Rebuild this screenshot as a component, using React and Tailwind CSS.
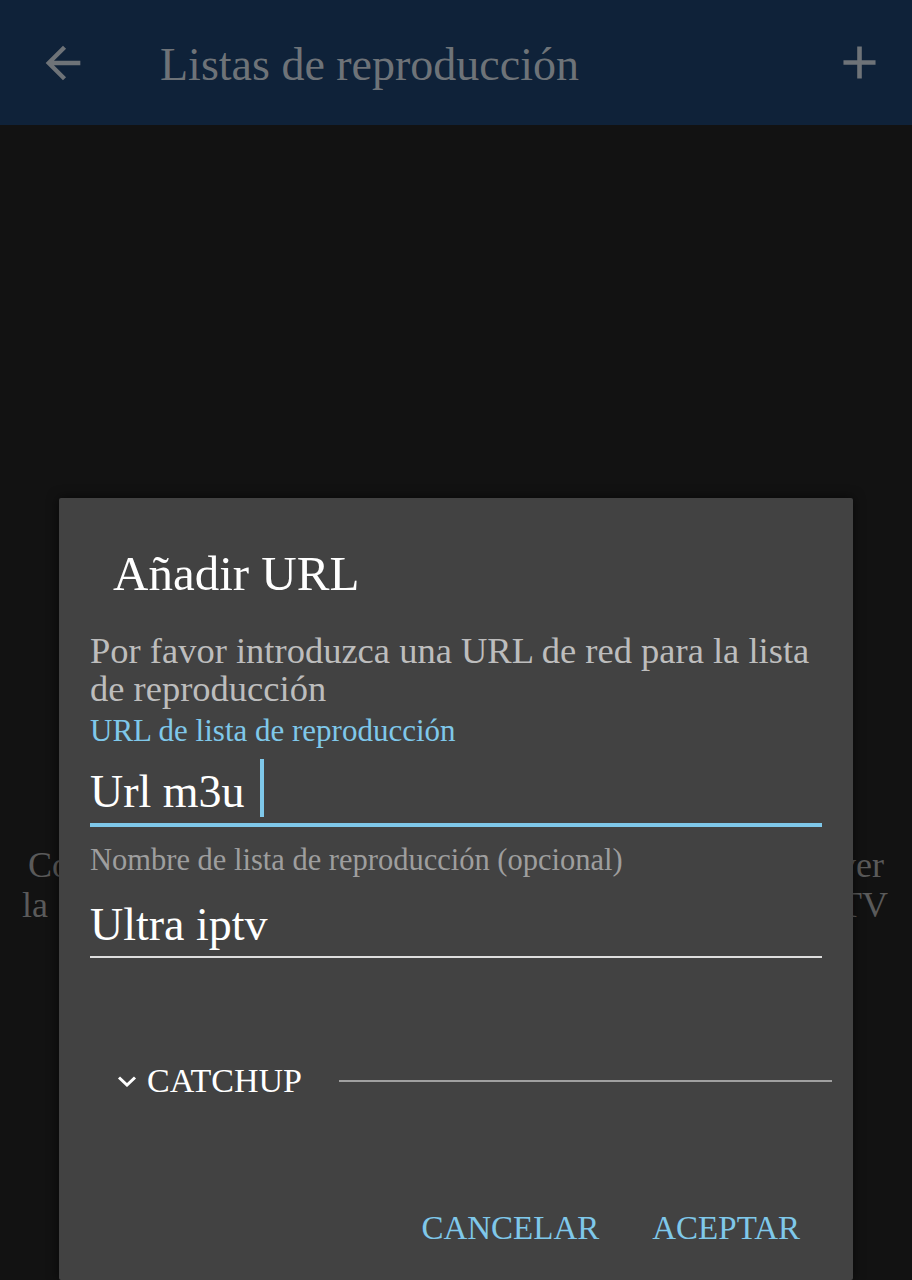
export default function App() {
  return (
    <div className="relative h-[1280px] w-full overflow-hidden bg-[#121212] font-['Liberation_Serif',serif]">
      <header className="flex h-[125px] items-center bg-[#0f2239] pl-[37px] pr-[25px] text-[#6e7378]">
        <svg width="52" height="52" viewBox="0 0 24 24" fill="currentColor" aria-hidden="true">
          <path d="M20 11H7.83l5.59-5.59L12 4l-8 8 8 8 1.41-1.41L7.83 13H20v-2z" />
        </svg>
        <h1 className="ml-[71px] mt-[4px] flex-1 text-[46px] leading-[52px]">Listas de reproducción</h1>
        <svg width="55" height="55" viewBox="0 0 24 24" fill="currentColor" aria-hidden="true">
          <path d="M19 13h-6v6h-2v-6H5v-2h6V5h2v6h6v2z" />
        </svg>
      </header>

      <div className="mt-[720px] text-[36px] leading-[40px] text-[#5a5a5a]">
        <div className="flex justify-between pl-[28px] pr-[28px]">
          <span>Co</span>
          <span>ver</span>
        </div>
        <div className="flex justify-between pl-[22px] pr-[24px]">
          <span>la</span>
          <span>IPTV</span>
        </div>
      </div>

      <div className="absolute bottom-0 left-[59px] top-[498px] w-[794px] rounded-[2px] bg-[#424242] shadow-[0_0_12px_rgba(0,0,0,0.6)]">
        <h2 className="ml-[54px] mt-[52px] text-[49px] leading-[48px] text-white">Añadir URL</h2>
        <div className="px-[31px]">
          <p className="mt-[34px] text-[36.5px] leading-[38px] text-[#bdbdbd]">
            Por favor introduzca una URL de red para la lista de reproducción
          </p>
          <div className="mt-[5px] text-[31px] leading-[36px] text-[#7fc8ea]">URL de lista de reproducción</div>
          <div className="mt-[10px] flex h-[58px] items-start">
            <span className="mt-[10px] text-[46px] leading-[46px] text-white">Url m3u</span>
            <span className="ml-[15px] h-[58px] w-[4px] bg-[#7fc8ea]"></span>
          </div>
          <div className="mt-[6px] h-[4px] bg-[#7fc8ea]"></div>
          <div className="mt-[16px] text-[30.5px] leading-[34px] text-[#9e9e9e]">Nombre de lista de reproducción (opcional)</div>
          <div className="mt-[25px] text-[46px] leading-[46px] text-white">Ultra iptv</div>
          <div className="mt-[8px] h-[2px] bg-[#dedede]"></div>

          <div className="mt-[105px] flex h-[36px] items-center">
            <svg className="ml-[27px]" width="20" height="11" viewBox="0 0 20 11" fill="none" stroke="white" strokeWidth="3" aria-hidden="true">
              <polyline points="2,1.5 10,9 18,1.5" />
            </svg>
            <span className="ml-[10px] text-[34px] leading-[36px] text-white">CATCHUP</span>
            <div className="-mr-[10px] ml-[37px] h-[2px] flex-1 bg-[#a0a0a0]"></div>
          </div>

          <div className="mr-[22px] mt-[111px] flex justify-end gap-[53px] text-[33px] leading-[36px] text-[#7fc8ea]">
            <span>CANCELAR</span>
            <span>ACEPTAR</span>
          </div>
        </div>
      </div>
    </div>
  );
}
